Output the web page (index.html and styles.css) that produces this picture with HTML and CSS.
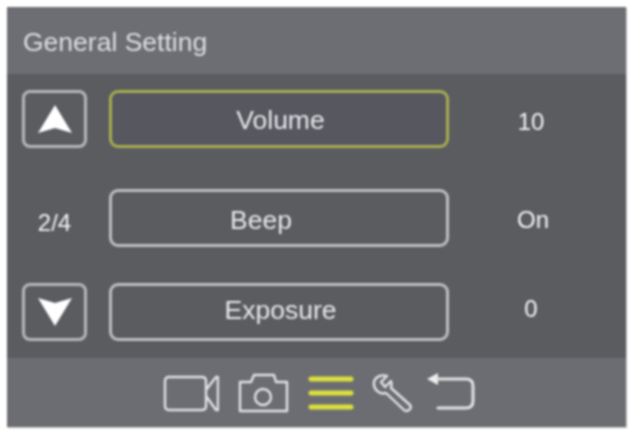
FILE: index.html
```html
<!DOCTYPE html>
<html lang="en">
<head>
<meta charset="utf-8">
<title>General Setting</title>
<link rel="stylesheet" href="styles.css">
</head>
<body>
<main class="panel">
  <header class="header">General Setting</header>
  <section class="body">
    <div class="row row-first">
      <div class="side"><button class="arrow"><svg width="36" height="30" viewBox="0 0 36 30"><path class="fill" d="M18 1 L35 29 L18 24 L1 29 Z"/></svg></button></div>
      <button class="item item-active">Volume</button>
      <div class="value value-volume">10</div>
    </div>
    <div class="row row-second">
      <div class="side page">2/4</div>
      <button class="item item-beep">Beep</button>
      <div class="value value-beep">On</div>
    </div>
    <div class="row row-third">
      <div class="side"><button class="arrow"><svg width="36" height="30" viewBox="0 0 36 30"><path class="fill" d="M18 29 L35 1 L18 6 L1 1 Z"/></svg></button></div>
      <button class="item item-exposure">Exposure</button>
      <div class="value value-exposure">0</div>
    </div>
  </section>
  <footer class="footer">
    <svg class="icon icon-video" width="57" height="40" viewBox="0 0 57 40"><path class="line" d="M7 4 H40 Q44 4 44 8 V33 Q44 37 40 37 H7 Q3 37 3 33 V8 Q3 4 7 4 Z M44 17 L54 4 H56 V37 H54 L44 23"/></svg>
    <svg class="icon icon-camera" width="51" height="40" viewBox="0 0 51 40"><path class="line" d="M2 38 V9 H13 L16 2 H36 L38 9 H49 V38 Z"/><circle class="line" cx="25" cy="24" r="8"/></svg>
    <svg class="icon icon-menu" width="46" height="40" viewBox="0 0 46 40"><path class="bars" d="M3 6 H43 M3 20 H43 M3 34 H43"/></svg>
    <svg class="icon icon-wrench" width="42" height="40" viewBox="0 0 42 40"><path class="line" d="M16 3 L10 9 L14 14 L20 8 C21 12 20.5 13 20 15 L39 32 Q41 35 38 37 Q35 39 33 37 L15 20 C8 22 2 16 3 9 C4 4 10 1 16 3 Z"/></svg>
    <svg class="icon icon-return" width="48" height="40" viewBox="0 0 48 40"><path class="arrowhead" d="M0 6 L11 0 V12 Z"/><path class="line line-heavy" d="M10 6 H39 Q46 6 46 13 V28 Q46 35 39 35 H11"/></svg>
  </footer>
</main>
</body>
</html>
```
FILE: styles.css
```css
html, body {
  margin: 0;
  padding: 0;
  background: #fff;
}
body {
  width: 639px;
  height: 444px;
  overflow: hidden;
  padding: 7px 0 0 7px;
  box-sizing: border-box;
  font-family: "Liberation Sans", Arial, sans-serif;
}
.panel {
  width: 619px;
  height: 420px;
  display: flex;
  flex-direction: column;
  background: #5b5d5f;
  filter: blur(0.8px);
  box-shadow: 1px 1px 1px #c9c9cb;
}
.header {
  height: 67px;
  flex: none;
  box-sizing: border-box;
  padding: 19px 0 0 16px;
  background: #6c6e74;
  color: #dcdee0;
  font-size: 26.5px;
  line-height: 32px;
}
.body {
  flex: 1;
  display: flex;
  flex-direction: column;
  box-sizing: border-box;
  padding: 16px 0 0 15px;
  background: #5b5c60;
}
.row {
  display: grid;
  grid-template-columns: 65px 340px 1fr;
  column-gap: 22px;
  height: 58px;
  align-items: center;
}
.row-second { margin-top: 41px; }
.row-third { margin-top: 36px; }
.side { display: flex; justify-content: center; align-items: center; height: 100%; }
.page {
  color: #f2f2f2;
  font-size: 24px;
  padding: 10px 0 0 0;
  box-sizing: border-box;
}
.arrow {
  width: 65px;
  height: 58px;
  padding: 0;
  display: flex;
  align-items: center;
  justify-content: center;
  background: transparent;
  border: 3px solid #b4b8b9;
  border-radius: 8px;
}
.item {
  width: 340px;
  height: 58px;
  background: transparent;
  border: 3px solid #bcbfbf;
  border-radius: 9px;
  color: #e8e8ea;
  font-family: inherit;
  font-size: 26.5px;
  padding: 2px 0 0 0;
}
.item-beep { padding: 4px 36px 0 0; }
.item-exposure { padding: 0 0 3px 3px; }
.item-active {
  border-color: #a9ac50;
  background: #56575f;
  padding-left: 3px;
}
.value {
  color: #f6f6f6;
  font-size: 24px;
  text-align: center;
  width: 100px;
  margin-left: 10px;
}
.value-volume { padding-top: 6px; }
.value-beep { padding-top: 4px; margin-left: 12px; }
.value-exposure { padding-bottom: 6px; }
.footer {
  height: 69px;
  flex: none;
  display: flex;
  align-items: flex-start;
  box-sizing: border-box;
  padding: 15px 0 0 155px;
  background: #6c6d73;
}
.icon { display: block; flex: none; }
.icon-camera { margin-left: 19px; }
.icon-menu { margin-left: 19px; }
.icon-wrench { margin-left: 17px; }
.icon-return { margin-left: 14px; }
.fill { fill: #fff; }
.line {
  fill: none;
  stroke: #e2e3e4;
  stroke-width: 2.4;
  stroke-linejoin: round;
  stroke-linecap: round;
}
.line-heavy { stroke-width: 3; }
.bars {
  fill: none;
  stroke: #dcdf3e;
  stroke-width: 5;
  stroke-linecap: round;
}
.arrowhead { fill: #eeeeee; }
```
